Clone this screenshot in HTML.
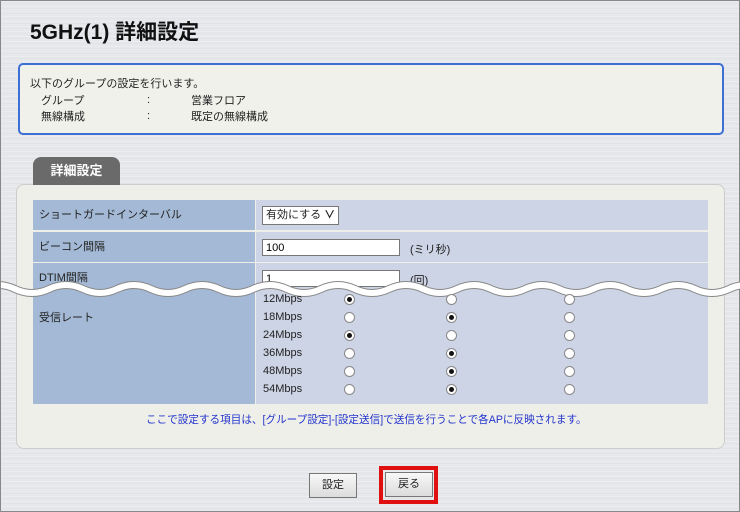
<!DOCTYPE html>
<html><head><meta charset="utf-8"><style>
*{margin:0;padding:0;box-sizing:border-box}
body{width:740px;height:512px;overflow:hidden;position:relative;font-family:"Liberation Sans","Noto Sans CJK JP",sans-serif;font-size:11px;color:#222;
background:repeating-linear-gradient(180deg,#e2e4e8 0,#eceef1 2px,#dfe1e5 3px,#e8eaee 5px);border:1px solid #888;}
.a{position:absolute;white-space:nowrap}
.title{left:29px;top:15px;font-size:21px;font-weight:bold;color:#111}
.info{left:17px;top:62px;width:706px;height:72px;border:2px solid #3d6fd4;border-radius:5px;background:#f1f1ec}
.tab{left:32px;top:156px;width:87px;height:28px;background:#6a6a6a;border-radius:8px 8px 0 0;color:#fff;font-weight:bold;font-size:13px;text-align:center;line-height:28px}
.panel{left:15px;top:183px;width:709px;height:265px;background:#efefea;border:1px solid #ccc;border-radius:8px}
.lab{background:#a3b9d5;left:32px;width:222px}
.val{background:#cdd4e6;left:255px;width:452px}
.row{position:absolute;height:30px;line-height:30px;padding-left:6px}
input.t{position:absolute;height:17px;border:1px solid #777;background:#fff;font-size:11px;padding-left:3px;font-family:inherit}
.r{position:absolute;width:11px;height:11px;border:1px solid #888;border-radius:50%;background:#fff}
.r.on::after{content:"";position:absolute;left:2px;top:2px;width:5px;height:5px;border-radius:50%;background:#111}
.btn{position:absolute;height:25px;border:1px solid #777;background:linear-gradient(#f8f8f8,#dcdcdc);text-align:center;line-height:23px;font-size:11px}
</style></head><body>
<div class="a title">5GHz(1) 詳細設定</div>
<div class="a info"></div>
<div class="a" style="left:29px;top:74px">以下のグループの設定を行います。</div>
<div class="a" style="left:40px;top:91px">グループ</div>
<div class="a" style="left:146px;top:93px">:</div>
<div class="a" style="left:190px;top:91px">営業フロア</div>
<div class="a" style="left:40px;top:107px">無線構成</div>
<div class="a" style="left:146px;top:109px">:</div>
<div class="a" style="left:190px;top:107px">既定の無線構成</div>

<div class="a panel"></div>
<div class="a tab">詳細設定</div>

<div class="row lab" style="top:199px">ショートガードインターバル</div>
<div class="row val" style="top:199px"></div>
<div class="a" style="left:261px;top:205px;width:77px;height:19px;border:1px solid #777;background:#fff;line-height:17px;padding-left:3px;font-size:11px">有効にする <span style="font-weight:bold">&#8744;</span></div>

<div class="row lab" style="top:231px">ビーコン間隔</div>
<div class="row val" style="top:231px"></div>
<input class="t" style="left:261px;top:238px;width:138px" value="100">
<div class="a" style="left:409px;top:240px">(ミリ秒)</div>

<div class="row lab" style="top:262px;height:28px">DTIM間隔</div>
<div class="row val" style="top:262px;height:28px"></div>
<input class="t" style="left:261px;top:269px;width:138px" value="1">
<div class="a" style="left:409px;top:271px">(回)</div>

<div class="row lab" style="top:290px;height:113px;line-height:54px">受信レート</div>
<div class="row val" style="top:290px;height:113px"></div>

<svg class="a" style="left:0;top:276px" width="740" height="24" viewBox="0 0 740 24">
<g fill="none">
<path id="w" d="M-20 12 Q-3 4 14 12 T48 12 T82 12 T116 12 T150 12 T184 12 T218 12 T252 12 T286 12 T320 12 T354 12 T388 12 T422 12 T456 12 T490 12 T524 12 T558 12 T592 12 T626 12 T660 12 T694 12 T728 12 T762 12" stroke="#888" stroke-width="8"/>
<path d="M-20 12 Q-3 4 14 12 T48 12 T82 12 T116 12 T150 12 T184 12 T218 12 T252 12 T286 12 T320 12 T354 12 T388 12 T422 12 T456 12 T490 12 T524 12 T558 12 T592 12 T626 12 T660 12 T694 12 T728 12 T762 12" stroke="#fff" stroke-width="6"/>
</g>
</svg>

<div class="a" style="left:262px;top:292px">12Mbps</div>
<div class="a" style="left:262px;top:310px">18Mbps</div>
<div class="a" style="left:262px;top:328px">24Mbps</div>
<div class="a" style="left:262px;top:346px">36Mbps</div>
<div class="a" style="left:262px;top:364px">48Mbps</div>
<div class="a" style="left:262px;top:382px">54Mbps</div>

<div class="r on" style="left:343px;top:293px"></div><div class="r" style="left:445px;top:293px"></div><div class="r" style="left:563px;top:293px"></div>
<div class="r" style="left:343px;top:311px"></div><div class="r on" style="left:445px;top:311px"></div><div class="r" style="left:563px;top:311px"></div>
<div class="r on" style="left:343px;top:329px"></div><div class="r" style="left:445px;top:329px"></div><div class="r" style="left:563px;top:329px"></div>
<div class="r" style="left:343px;top:347px"></div><div class="r on" style="left:445px;top:347px"></div><div class="r" style="left:563px;top:347px"></div>
<div class="r" style="left:343px;top:365px"></div><div class="r on" style="left:445px;top:365px"></div><div class="r" style="left:563px;top:365px"></div>
<div class="r" style="left:343px;top:383px"></div><div class="r on" style="left:445px;top:383px"></div><div class="r" style="left:563px;top:383px"></div>

<div class="a" style="left:145px;top:411px;color:#2233cc;font-size:10.6px">ここで設定する項目は、[グループ設定]-[設定送信]で送信を行うことで各APに反映されます。</div>

<div class="btn" style="left:308px;top:472px;width:48px">設定</div>
<div class="a" style="left:378px;top:465px;width:59px;height:38px;border:4px solid #e01010"></div>
<div class="btn" style="left:384px;top:471px;width:48px">戻る</div>
</body></html>
